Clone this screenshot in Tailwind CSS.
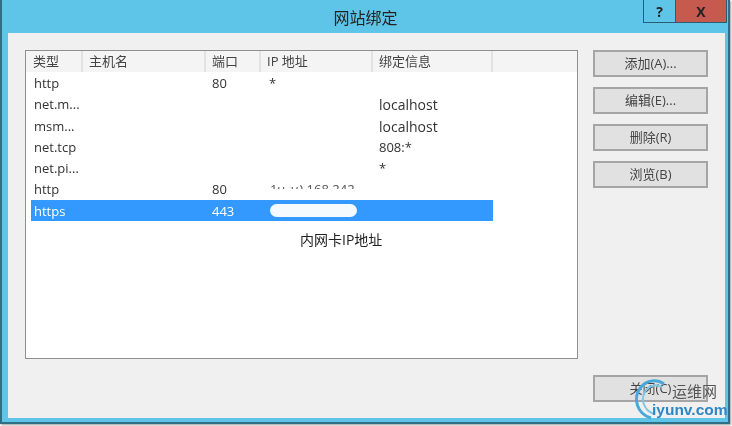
<!DOCTYPE html>
<html lang="zh">
<head>
  <meta charset="UTF-8" />
  <title>网站绑定</title>
  <script src="https://cdn.jsdelivr.net/npm/@tailwindcss/browser@4"></script>
</head>
<body class="w-[732px] h-[426px] overflow-hidden bg-white font-['Open_Sans','Noto_Sans_CJK_SC',sans-serif] text-[13px] text-[#333]">
  <div class="relative w-[730px] h-[424px] flex flex-col bg-[#5fc5e8] border-l-2 border-r-2 border-b-2 border-[#2f6f86] shadow-[1px_1px_2px_#999] blur-[0.4px]">
    <!-- title bar -->
    <div class="h-[33px] shrink-0 flex items-start">
      <div class="flex-1 pt-[7px] pl-[86px] text-center text-[16px] leading-[22px] text-[#222]">网站绑定</div>
      <div class="flex mr-[1px]">
        <div class="w-[32px] h-[23px] flex items-center justify-center border-l border-b border-[#2a5f73] font-bold text-[14px] text-[#222]">?</div>
        <div class="w-[52px] h-[23px] flex items-center justify-center border-l border-r border-b border-[#2a5f73] bg-[#c75a4f] font-bold text-[14px] text-[#222]">X</div>
      </div>
    </div>
    <!-- client area -->
    <div class="ml-[6px] mr-[3px] mb-[4px] flex-1 flex bg-[#f0f0f0] pl-[17px] pt-[17px]">
      <div class="w-[553px] h-[309px] shrink-0 border border-[#8f8f8f] bg-white">
        <div class="flex h-[21px] bg-[#f4f4f4] text-[13px] leading-[21px] text-[#444]">
          <div class="w-[57px] pl-[7px] border-r-2 border-[#e2e2e2]">类型</div>
          <div class="w-[123px] pl-[6px] border-r-2 border-[#e2e2e2]">主机名</div>
          <div class="w-[55px] pl-[6px] border-r-2 border-[#e2e2e2]">端口</div>
          <div class="w-[112px] pl-[6px] border-r-2 border-[#e2e2e2]">IP 地址</div>
          <div class="w-[120px] pl-[6px] border-r-2 border-[#e2e2e2]">绑定信息</div>
        </div>
        <div class="pl-[5px] leading-[23px]">
          <div class="grid grid-cols-[180px_55px_112px_115px] w-[462px] h-[21.3px]"><span class="pl-[3px]">http</span><span class="pl-[1px]">80</span><span class="pl-[3px]">*</span><span></span></div>
          <div class="grid grid-cols-[180px_55px_112px_115px] w-[462px] h-[21.3px]"><span class="pl-[3px]">net.m...</span><span></span><span></span><span class="pl-[1px] text-[14px]">localhost</span></div>
          <div class="grid grid-cols-[180px_55px_112px_115px] w-[462px] h-[21.3px]"><span class="pl-[3px]">msm...</span><span></span><span></span><span class="pl-[1px] text-[14px]">localhost</span></div>
          <div class="grid grid-cols-[180px_55px_112px_115px] w-[462px] h-[21.3px]"><span class="pl-[3px]">net.tcp</span><span></span><span></span><span class="pl-[1px]">808:*</span></div>
          <div class="grid grid-cols-[180px_55px_112px_115px] w-[462px] h-[21.3px]"><span class="pl-[3px]">net.pi...</span><span></span><span></span><span class="pl-[1px]">*</span></div>
          <div class="grid grid-cols-[180px_55px_112px_115px] w-[462px] h-[21.3px]">
            <span class="pl-[3px]">http</span><span class="pl-[1px]">80</span>
            <span class="relative pl-[4px] whitespace-nowrap text-[#555]">10.10.168.242
              <span class="absolute left-0 top-[11px] w-full h-[11px] bg-white"></span>
              <span class="absolute left-[12px] top-[2px] w-[22px] h-[7px] bg-white"></span>
            </span>
            <span></span>
          </div>
          <div class="grid grid-cols-[180px_55px_112px_115px] w-[462px] h-[21.3px] items-start bg-[#3399ff] text-white"><span class="pl-[3px]">https</span><span class="pl-[1px]">443</span><span class="ml-[4px] mt-[4px] w-[87px] h-[13px] rounded-full bg-[#f4faff]"></span><span></span></div>
        </div>
        <div class="w-[462px] pt-[9px] text-[14px] leading-[20px] text-[#222]"><span class="ml-[274px] inline-block">内网卡IP地址</span></div>
      </div>
      <div class="ml-[15px] flex flex-col">
        <div class="w-[115px] h-[27px] mb-[10px] flex items-center justify-center border-2 border-[#a5a5a5] bg-[#e1e1e1] text-[#444]">添加(A)...</div>
        <div class="w-[115px] h-[27px] mb-[10px] flex items-center justify-center border-2 border-[#a5a5a5] bg-[#e1e1e1] text-[#444]">编辑(E)...</div>
        <div class="w-[115px] h-[27px] mb-[10px] flex items-center justify-center border-2 border-[#a5a5a5] bg-[#e1e1e1] text-[#444]">删除(R)</div>
        <div class="w-[115px] h-[27px] flex items-center justify-center border-2 border-[#a5a5a5] bg-[#e1e1e1] text-[#444]">浏览(B)</div>
        <div class="w-[115px] h-[27px] mt-[187px] flex items-center justify-center border-2 border-[#a5a5a5] bg-[#e1e1e1] text-[#444]">关闭(C)</div>
      </div>
    </div>
    <!-- watermark -->
    <svg class="absolute left-[627px] top-[378px]" width="50" height="44" viewBox="0 0 50 44" fill="none">
      <path d="M22 40C8 36 3 20 12 9C18 2 28 1 35 6" stroke="#4aa8d8" stroke-width="3"/>
      <path d="M25 36C14 32 11 20 17 12C21 7 28 6 33 9" stroke="#7fc6e6" stroke-width="2"/>
    </svg>
    <div class="absolute left-[670px] top-[383px] text-[15px] leading-[16px] text-[#555]">运维网</div>
    <div class="absolute left-[650px] top-[402px] font-['Liberation_Sans'] text-[15.5px] leading-[16px] font-bold text-[#2f86c4]">iyunv.com</div>
  </div>
</body>
</html>
